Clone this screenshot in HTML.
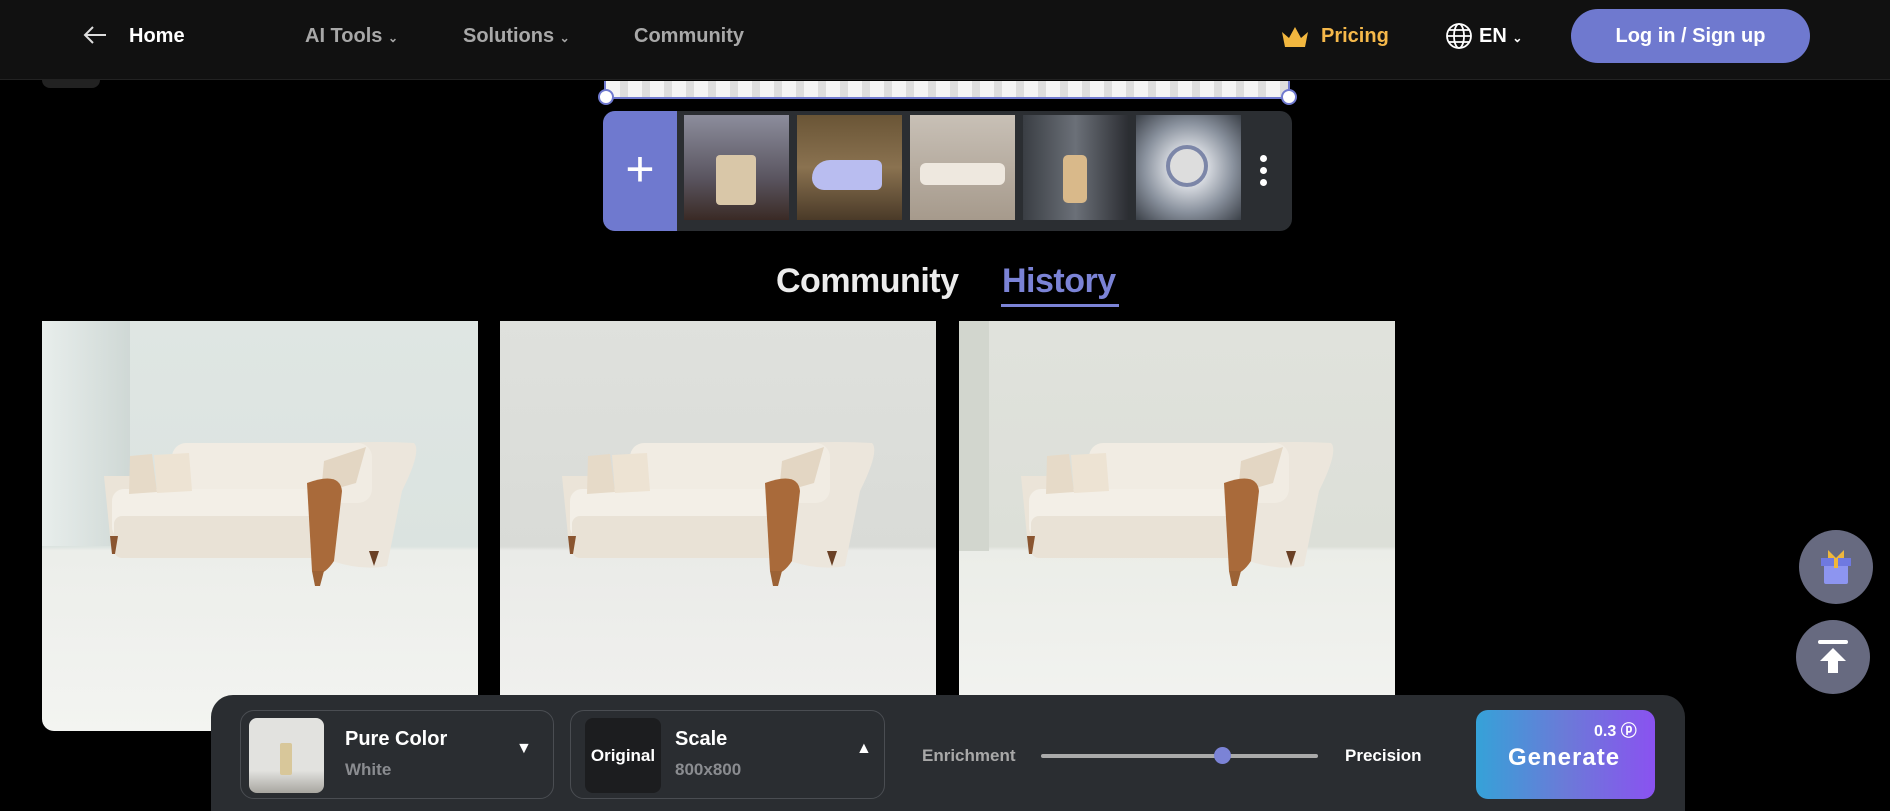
<!DOCTYPE html>
<html style="overflow:hidden;height:811px"><head><meta charset="utf-8"><style>
*{margin:0;padding:0;box-sizing:border-box}
body{width:1890px;height:811px;background:#000;overflow:hidden;position:relative;font-family:"Liberation Sans",sans-serif;font-weight:bold}
.hdr{position:absolute;left:0;top:0;width:1890px;height:80px;background:#111;border-bottom:1px solid #222}
.t{position:absolute;white-space:nowrap}
.nav{color:#a8a8a8;font-size:20px;top:25px}
.img{position:absolute;top:321px;width:436px;height:410px;overflow:hidden}
.panel{position:absolute;left:211px;top:695px;width:1474px;height:116px;background:#2a2d31;border-radius:22px 22px 0 0}
.box{position:absolute;top:15px;height:89px;border:1px solid #4a4d52;border-radius:14px}
.circ{position:absolute;width:74px;height:74px;border-radius:50%;background:#676a80}
</style></head><body>
<div class="hdr"></div>
<svg style="position:absolute;left:82px;top:25px" width="26" height="20" viewBox="0 0 26 20"><path d="M24 10H3M11 2 3 10l8 8" stroke="#ddd" stroke-width="2" fill="none"/></svg>
<div class="t" style="left:129px;top:25px;color:#fff;font-size:20px">Home</div>
<div class="t nav" style="left:305px">AI Tools <span style="font-size:12px">⌄</span></div>
<div class="t nav" style="left:463px">Solutions <span style="font-size:12px">⌄</span></div>
<div class="t nav" style="left:634px">Community</div>
<svg style="position:absolute;left:1280px;top:26px" width="30" height="22" viewBox="0 0 30 22"><path d="M2 6l7 6 6-11 6 11 7-6-3 15H5z" fill="#f2b73f"/></svg>
<div class="t" style="left:1321px;top:25px;color:#f5b84a;font-size:20px">Pricing</div>
<svg style="position:absolute;left:1445px;top:22px" width="28" height="28" viewBox="0 0 28 28" fill="none" stroke="#fff" stroke-width="1.8"><circle cx="14" cy="14" r="12"/><ellipse cx="14" cy="14" rx="5" ry="12"/><path d="M2 14h24M4 8h20M4 20h20"/></svg>
<div class="t" style="left:1479px;top:25px;color:#fff;font-size:20px">EN <span style="font-size:12px">⌄</span></div>
<div style="position:absolute;left:1571px;top:9px;width:239px;height:54px;border-radius:27px;background:#6f79cf;color:#fff;font-size:20px;text-align:center;line-height:54px">Log in / Sign up</div>
<div style="position:absolute;left:42px;top:80px;width:58px;height:8px;background:#222;border-radius:0 0 8px 8px"></div>
<div style="position:absolute;left:604px;top:81px;width:686px;height:18px;background:repeating-linear-gradient(90deg,#f4f4f4 0 14px,#ddd 14px 22px);border:2px solid #6f79cf;border-top:none"></div>
<div style="position:absolute;left:598px;top:89px;width:16px;height:16px;border-radius:50%;background:#fff;border:2px solid #6f79cf"></div>
<div style="position:absolute;left:1281px;top:89px;width:16px;height:16px;border-radius:50%;background:#fff;border:2px solid #6f79cf"></div>
<div style="position:absolute;left:603px;top:111px;width:689px;height:120px;background:#2b2e32;border-radius:12px;overflow:hidden">
<div style="position:absolute;left:0;top:0;width:74px;height:120px;background:#6f79cf;color:#fff;font-size:50px;font-weight:normal;text-align:center;line-height:116px">+</div>
<div style="position:absolute;left:81px;top:4px;width:105px;height:105px;background:linear-gradient(#8c8d9c,#5a5560 60%,#3a2a25)"><div style="position:absolute;left:32px;top:40px;width:40px;height:50px;background:#d9c7a8;border-radius:4px"></div></div>
<div style="position:absolute;left:194px;top:4px;width:105px;height:105px;background:linear-gradient(#6a5536,#8a7250 50%,#4a3a28)"><div style="position:absolute;left:15px;top:45px;width:70px;height:30px;background:#b9bdf0;border-radius:30px 10px 10px 20px"></div></div>
<div style="position:absolute;left:307px;top:4px;width:105px;height:105px;background:linear-gradient(#c8c0b6,#a69a8c)"><div style="position:absolute;left:10px;top:48px;width:85px;height:22px;background:#eee8df;border-radius:6px"></div></div>
<div style="position:absolute;left:420px;top:4px;width:105px;height:105px;background:linear-gradient(90deg,#3a3e44,#6b7078 50%,#2c2e33)"><div style="position:absolute;left:40px;top:40px;width:24px;height:48px;background:#d9b98a;border-radius:5px"></div></div>
<div style="position:absolute;left:533px;top:4px;width:105px;height:105px;background:radial-gradient(circle,#eef0f4 15%,#8a929e 60%,#3b4048)"><div style="position:absolute;left:30px;top:30px;width:42px;height:42px;border-radius:50%;border:4px solid #7c86a8;background:#ddd"></div></div>
<div style="position:absolute;left:657px;top:44px;width:7px;height:7px;border-radius:50%;background:#fff;box-shadow:0 12px #fff,0 24px #fff"></div>
</div>
<div class="t" style="left:776px;top:262px;color:#ececec;font-size:34px;letter-spacing:-0.5px">Community</div>
<div class="t" style="left:1002px;top:262px;color:#7b83d6;font-size:34px;letter-spacing:-0.5px">History</div>
<div style="position:absolute;left:1001px;top:304px;width:118px;height:3px;background:#7b83d6"></div>
<svg width="0" height="0" style="position:absolute"><defs>
<g id="sofa">
<path d="M255 130 Q300 118 372 122 Q380 130 360 170 L345 245 Q320 250 290 240 Z" fill="#ece6dc"/>
<rect x="130" y="122" width="200" height="60" rx="14" fill="#f1ece3"/>
<path d="M62 155h30v60H68z" fill="#ebe4d8"/>
<rect x="70" y="168" width="220" height="50" rx="12" fill="#f3efe7"/>
<rect x="72" y="195" width="218" height="42" rx="8" fill="#e9e2d6"/>
<path d="M88 135l22-2 5 38-28 2z" fill="#e6dac8"/><path d="M112 134l35-2 3 38-35 2z" fill="#ede3d3"/>
<path d="M282 140l42-14-10 36-35 10z" fill="#e3d6c3"/>
<path d="M265 162 Q298 150 300 170 L292 240 Q280 258 270 250 Z" fill="#a96a3a"/>
<path d="M68 215l8 0-3 18h-3z" fill="#8a5530"/>
<path d="M270 250h12l-4 15h-5z" fill="#9c6235"/>
<path d="M327 230h10l-5 15z" fill="#6a4025"/>
</g></defs></svg>
<div class="img" style="left:42px;border-radius:0 0 12px 12px;background:linear-gradient(#dfe6e3 0,#dbe3e0 55%,#eceeea 56%,#f3f4f1 100%)">
<div style="position:absolute;left:0;top:0;width:88px;height:225px;background:linear-gradient(90deg,#e8eeec,#cfd8d5)"></div>
<svg width="436" height="410" style="position:absolute;left:0;top:0"><use href="#sofa"/></svg></div>
<div class="img" style="left:500px;background:linear-gradient(#dfe1dd 0,#d9dbd7 55%,#eaebe8 56%,#f1f1ef 100%)">
<svg width="436" height="410" style="position:absolute;left:0;top:0"><use href="#sofa"/></svg></div>
<div class="img" style="left:959px;background:linear-gradient(#e0e2dc 0,#dcdfd8 55%,#ebede8 56%,#f3f4f1 100%)">
<div style="position:absolute;left:0;top:0;width:30px;height:230px;background:#d2d6ce"></div>
<svg width="436" height="410" style="position:absolute;left:0;top:0"><use href="#sofa"/></svg></div>
<div class="circ" style="left:1799px;top:530px"><svg style="position:absolute;left:20px;top:18px" width="34" height="38" viewBox="0 0 34 38"><rect x="5" y="16" width="24" height="20" rx="2" fill="#8d95f0"/><rect x="2" y="10" width="30" height="8" fill="#6f79e0"/><path d="M17 10 9 2v8zM17 10l8-8v8z" fill="#f0b73b"/><rect x="15" y="10" width="4" height="10" fill="#f0b73b"/></svg></div>
<div class="circ" style="left:1796px;top:620px"><svg style="position:absolute;left:20px;top:18px" width="34" height="40" viewBox="0 0 34 40"><rect x="2" y="2" width="30" height="4" rx="2" fill="#fff"/><path d="M17 10 4 23h8v12h10V23h8z" fill="#fff"/></svg></div>
<div class="panel">
<div class="box" style="left:29px;width:314px">
<div style="position:absolute;left:8px;top:7px;width:75px;height:75px;border-radius:8px;background:linear-gradient(#e2e2df 70%,#a8a6a0)"><div style="position:absolute;left:31px;top:25px;width:12px;height:32px;background:#d8c79a;border-radius:2px"></div></div>
<div class="t" style="left:104px;top:17px;color:#fff;font-size:20px">Pure Color</div>
<div class="t" style="left:104px;top:49px;color:#8a8c90;font-size:17px">White</div>
<div class="t" style="left:275px;top:29px;color:#fff;font-size:16px">▼</div>
</div>
<div class="box" style="left:359px;width:315px">
<div style="position:absolute;left:14px;top:7px;width:76px;height:75px;border-radius:8px;background:#1c1d1f;color:#fff;font-size:17px;text-align:center;line-height:75px">Original</div>
<div class="t" style="left:104px;top:17px;color:#fff;font-size:20px">Scale</div>
<div class="t" style="left:104px;top:49px;color:#8a8c90;font-size:17px">800x800</div>
<div class="t" style="left:285px;top:29px;color:#fff;font-size:16px">▲</div>
</div>
<div class="t" style="left:711px;top:51px;color:#a8a8a8;font-size:17px">Enrichment</div>
<div style="position:absolute;left:830px;top:59px;width:277px;height:4px;background:#aaa;border-radius:2px"></div>
<div style="position:absolute;left:1003px;top:52px;width:17px;height:17px;border-radius:50%;background:#7b83d6"></div>
<div class="t" style="left:1134px;top:51px;color:#fff;font-size:17px">Precision</div>
<div style="position:absolute;left:1265px;top:15px;width:179px;height:89px;border-radius:12px;background:linear-gradient(90deg,#35a2d8,#6b7ad8 50%,#8a52f0)">
<div class="t" style="left:118px;top:7px;color:#fff;font-size:16px">0.3 ⓟ</div>
<div class="t" style="left:32px;top:34px;color:#fff;font-size:24px;letter-spacing:1px">Generate</div>
</div>
</div>
</body></html>
